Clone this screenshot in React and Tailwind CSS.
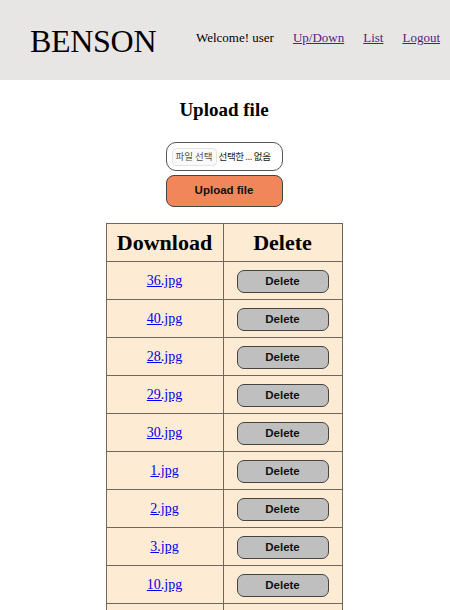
import { useState } from "react";

const archivos = ["36.jpg", "40.jpg", "28.jpg", "29.jpg", "30.jpg", "1.jpg", "2.jpg", "3.jpg", "10.jpg", "11.jpg"];

export default function App() {
  const [files, setFiles] = useState(archivos);

  const borrar = (name) => setFiles(files.filter((f) => f !== name));

  return (
    <div className="min-h-screen bg-white text-black" style={{ fontFamily: '"Liberation Serif", serif' }}>
      {/* HEADER */}
      <header className="h-20 bg-[#e8e5e5] flex items-center pl-[30px] pr-[10px]">
        <h1 className="text-[32px] leading-none mt-[1px] tracking-[-0.3px]">BENSON</h1>
        <nav className="ml-auto flex items-center gap-[19px] text-[13px] -mt-[4px]">
          <span>Welcome! user</span>
          <a href="#" className="underline text-[#551a8b]">Up/Down</a>
          <a href="#" className="underline text-[#551a8b]">List</a>
          <a href="#" className="underline text-[#551a8b]">Logout</a>
        </nav>
      </header>

      {/* UPLOAD */}
      <main className="flex flex-col items-center pr-[2px]">
        <h2 className="mt-[19px] text-[19px] font-bold leading-[22px]">Upload file</h2>

        <div
          className="mt-[21px] w-[117px] h-[29px] rounded-[10px] border border-[#555] bg-white flex items-center pl-[5px] gap-[2px] text-[9.5px] whitespace-nowrap overflow-hidden"
          style={{ fontFamily: '"Noto Sans CJK KR", "Noto Sans", sans-serif' }}
        >
          <span className="px-[3px] h-[18px] flex items-center rounded-[4px] border border-[#e3e3e3] bg-[#fafafa] text-[#555]">파일 선택</span>
          <span className="text-[#222] tracking-[-0.4px]">선택한 ... 없음</span>
        </div>

        <button
          className="mt-[4px] w-[117px] h-[32px] rounded-[8px] border border-[#444] bg-[#f0865a] text-[11.5px] font-bold text-[#111]"
          style={{ fontFamily: '"Liberation Sans", Arial, sans-serif' }}
        >
          Upload file
        </button>

        {/* TABLA */}
        <table className="mt-[16px] border-collapse w-[237px] bg-[#fdebd3]">
          <thead>
            <tr className="h-[38px]">
              <th className="w-[117px] border border-[#6f665c] text-[22px] font-bold">Download</th>
              <th className="border border-[#6f665c] text-[22px] font-bold">Delete</th>
            </tr>
          </thead>
          <tbody>
            {files.map((f) => (
              <tr key={f} className="h-[38px]">
                <td className="border border-[#6f665c] text-center text-[14px]">
                  <a href="#" className="underline text-[#0000ee]">{f}</a>
                </td>
                <td className="border border-[#6f665c] text-center">
                  <button
                    onClick={() => borrar(f)}
                    className="w-[92px] h-[23px] rounded-[7px] border border-[#444] bg-[#bfbfbf] text-[11.5px] font-bold text-[#111] align-middle"
                    style={{ fontFamily: '"Liberation Sans", Arial, sans-serif' }}
                  >
                    Delete
                  </button>
                </td>
              </tr>
            ))}
          </tbody>
        </table>
      </main>
    </div>
  );
}
